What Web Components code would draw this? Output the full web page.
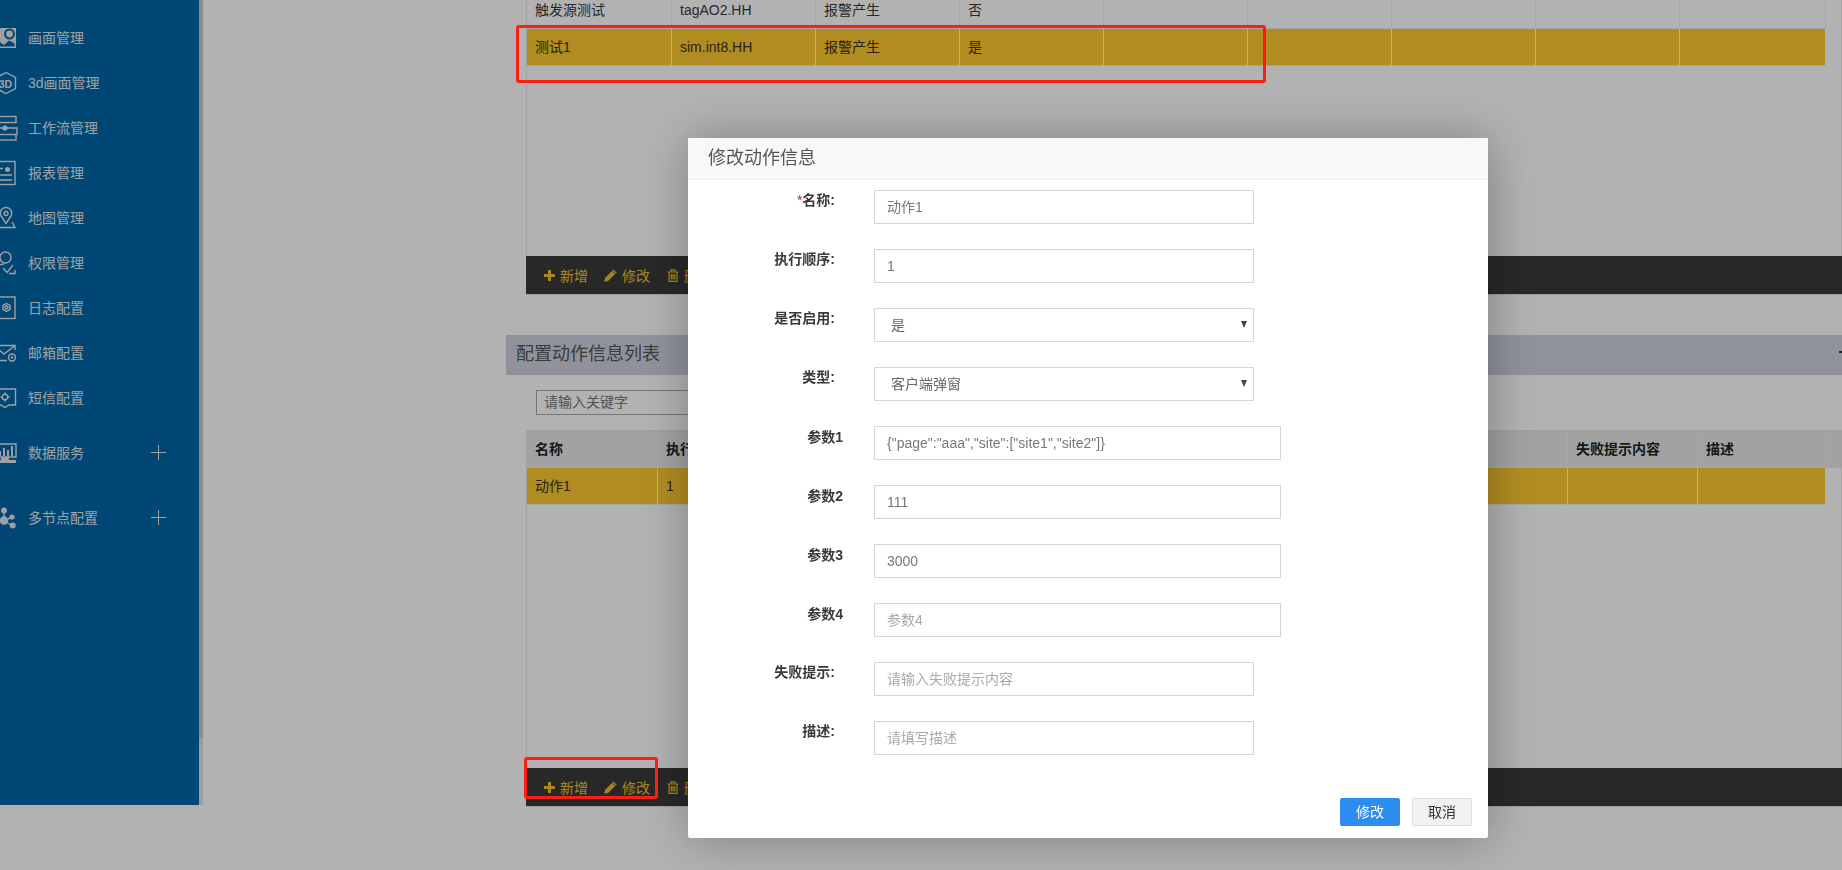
<!DOCTYPE html>
<html lang="zh"><head><meta charset="utf-8"><title>修改动作信息</title>
<style>
html,body{margin:0;height:870px;overflow:hidden;background:#fff;font:14px "Liberation Sans","Noto Sans CJK SC",sans-serif;color:#333}
</style></head><body>
<app-page>
  <side-nav>
    <nav-item icon="top"></nav-item>
    <nav-item icon="pic">画面管理</nav-item>
    <nav-item icon="d3">3d画面管理</nav-item>
    <nav-item icon="flow">工作流管理</nav-item>
    <nav-item icon="report">报表管理</nav-item>
    <nav-item icon="map">地图管理</nav-item>
    <nav-item icon="user">权限管理</nav-item>
    <nav-item icon="log">日志配置</nav-item>
    <nav-item icon="mail">邮箱配置</nav-item>
    <nav-item icon="sms">短信配置</nav-item>
    <nav-item icon="data" plus style="margin-top:10px">数据服务</nav-item>
    <nav-item icon="node" plus style="margin-top:20px">多节点配置</nav-item>
  </side-nav>
  <work-area>
    <data-table style="--cols:145px 144px 144px 144px 144px 144px 144px 144px 146px;height:264px;margin-top:-8px">
      <t-row cells="触发源测试|tagAO2.HH|报警产生|否|||||"></t-row>
      <t-row kind="gold" cells="测试1|sim.int8.HH|报警产生|是|||||"></t-row>
    </data-table>
    <tool-bar></tool-bar>
    <section-title>配置动作信息列表</section-title>
    <search-box>请输入关键字</search-box>
    <data-table style="--cols:131px 130px 130px 130px 130px 130px 130px 130px 130px 128px;height:338px;border-top:1px solid #e4e4e4">
      <t-row kind="head" cells="名称|执行顺序|||||||失败提示内容|描述"></t-row>
      <t-row kind="gold" cells="动作1|1||||||||"></t-row>
    </data-table>
    <tool-bar></tool-bar>
  </work-area>
</app-page>
<modal-layer heading="修改动作信息">
  <form-field label="名称:" required value="动作1"></form-field>
  <form-field label="执行顺序:" value="1"></form-field>
  <form-field label="是否启用:" value="是" select></form-field>
  <form-field label="类型:" value="客户端弹窗" select></form-field>
  <form-field label="参数1" value='{"page":"aaa","site":["site1","site2"]}' wide></form-field>
  <form-field label="参数2" value="111" wide></form-field>
  <form-field label="参数3" value="3000" wide></form-field>
  <form-field label="参数4" hint="参数4" wide></form-field>
  <form-field label="失败提示:" hint="请输入失败提示内容"></form-field>
  <form-field label="描述:" hint="请填写描述"></form-field>
  <modal-button slot="foot" primary>修改</modal-button>
  <modal-button slot="foot">取消</modal-button>
</modal-layer>
<mark-box style="left:516px;top:25px;width:750px;height:58px"></mark-box>
<mark-box style="left:524px;top:757px;width:134px;height:42px"></mark-box>
<script>
const FONT='"Liberation Sans","Noto Sans CJK SC",sans-serif';
function def(name,css,html,init){
  customElements.define(name,class extends HTMLElement{
    constructor(){super();this.attachShadow({mode:'open'});}
    connectedCallback(){
      const h=typeof html==='function'?html(this):html;
      this.shadowRoot.innerHTML='<style>'+css+'</style>'+h;
      if(init)init(this);
    }
  });
}
const C='#e3e6e8',B='#0066aa';
const S=`fill="none" stroke="${C}" stroke-width="1.4"`;
const ICONS={
 top:`<path d="M-6 4.5H6" ${S}/><circle cx="12" cy="2" r="2.6" ${S}/><path d="M6 4.5L10 3" ${S}/>`,
 pic:`<path fill="${C}" d="M-6-9H16V11H-6z"/><path fill="${B}" d="M-6 1L4 8 9 3.500 14.600 6.500V9.600H-6z"/><circle cx="9.500" cy="-3" r="5.500" fill="${B}"/><circle cx="9.500" cy="-3" r="3.400" fill="${C}"/>`,
 d3:`<path d="M6-9.500L15.500-4.500V6.500L6 11.500-3.500 6.500V-4.500z" ${S}/><text x="5.500" y="5.500" text-anchor="middle" font-family="Liberation Sans" font-weight="700" font-size="10.500" fill="${C}">3D</text>`,
 flow:`<rect x="-3" y="-10.500" width="19" height="6" ${S}/><path d="M-6 1H17V8" ${S}/><circle cx="5" cy="1" r="2.600" fill="${C}"/><rect x="-4" y="7.500" width="20" height="5.500" ${S}/>`,
 report:`<rect x="-5" y="-10.500" width="20" height="23" ${S}/><circle cx="7.500" cy="-2.500" r="2.500" fill="${C}"/><path d="M-2-3.500H3M-2 3H12M-2 8H12" fill="none" stroke="${C}" stroke-width="1.700"/>`,
 map:`<path d="M6 6.500L1.800 0A5.700 5.700 0 1 1 10.200 0z" ${S}/><circle cx="6" cy="-3.500" r="2" ${S}/><path d="M-6 10.500H15L12 5" ${S}/>`,
 user:`<circle cx="5.500" cy="-4.500" r="5.500" ${S}/><path d="M-6 8C-3 3 1 2 4 2M3 6L7 10.500 13 3M9 11.500H15V8" ${S}/>`,
 log:`<rect x="-5" y="-10" width="20" height="21.500" ${S}/><path d="M6.500-3.500L10-1.500V2.500L6.500 4.500 3 2.500V-1.500z" ${S}/><circle cx="6.500" cy=".5" r="1.500" ${S}/>`,
 mail:`<path d="M15-2V-6.500H-6V8.500H7M-6-6.500L4 2 15-6.500" ${S}/><circle cx="12" cy="5.500" r="3.500" ${S}/><circle cx="12" cy="5.500" r="1.200" fill="${C}"/>`,
 sms:`<path d="M-6-8H15.500V8H9L5 10.500 1 8H-6z" ${S}/><circle cx="5" cy="0" r="2.800" ${S}/><path d="M5-4.500V-3M5 3V4.500M.5 0H2M8 0H9.500" ${S}/>`,
 data:`<path d="M-6-8H16V5H-6z" ${S}/><path fill="${C}" d="M-1-1H1V4H-1zM3-4H5V4H3zM7-2H9V4H7zM11-6H13V4H11zM-6 8H16V11H-6zM1 5H9V8H1z"/>`,
 node:`<path d="M4-7V4M12 0L4 4M13 9L4 4" ${S}/><circle cx="4" cy="-6.500" r="3" fill="${C}"/><circle cx="12" cy="0" r="2.600" fill="${C}"/><circle cx="12.700" cy="8.500" r="3" fill="${C}"/><circle cx="4" cy="3.500" r="4.200" fill="${C}"/>`
};
const boxes={
 plus:'<svg width="11" height="11" viewBox="0 0 11 11"><path fill="currentColor" d="M4 0H7V4H11V7H7V11H4V7H0V4H4z"/></svg>',
 pencil:'<svg width="13" height="13" viewBox="0 0 13 13"><path fill="currentColor" d="M9.500.5L12.500 3.500 4 12 .3 12.700 1 9zM8.500 2.800L10.300 4.600 11 3.900 9.200 2.100z"/></svg>',
 trash:'<svg width="12" height="13" viewBox="0 0 12 13"><path fill="none" stroke="currentColor" stroke-width="1.200" d="M.5 3H11.500M2 3V12.300H10V3M4 2.800V.8H8V2.800M4.300 5V10.500M6 5V10.500M7.700 5V10.500"/></svg>'
};
def('app-page',`:host{display:flex;align-items:flex-start;width:1842px;height:870px;overflow:hidden;font-family:${FONT}}`,'<slot></slot>');
def('side-nav',`:host{display:flex;flex:none;width:203px;height:805px;overflow:hidden;background:#0066aa}
 nav{flex:none;width:199px;margin-top:-31px;display:flex;flex-direction:column}
 .track{flex:none;width:4px;height:805px;background:#dce3ea}.thumb{height:738px;background:#c6c6c6}`,
 '<nav><slot></slot></nav><div class="track"><div class="thumb"></div></div>');
def('nav-item',`:host{display:flex;align-items:center;flex:none;height:45px;color:#e2e6e9;font-size:14px;font-family:${FONT}}
 svg{flex:none;width:24px;height:24px;margin-left:-6px;overflow:visible}
 .t{margin-left:10px;white-space:nowrap;flex:1}
 .p{flex:none;width:15px;height:15px;margin:2px 33px 0 0}`,
 el=>`<svg viewBox="-6 -12 24 24">${ICONS[el.getAttribute('icon')]||''}</svg><span class="t"><slot></slot></span>${el.hasAttribute('plus')?`<svg class="p" style="margin-left:0" viewBox="0 0 15 15"><path d="M7.500 0V15M0 7.500H15" stroke="#e9e9e9" fill="none"/></svg>`:''}`);
def('work-area',`:host{display:flex;flex-direction:column;flex:1;min-width:0}`,'<slot></slot>');
def('data-table',`:host{display:block;flex:none;box-sizing:border-box;margin-left:323px;border-left:1px solid #e8e8e8;border-right:1px solid #e8e8e8;overflow:hidden;font-size:14px;color:#3a3a3a}`,'<slot></slot>');
def('t-row',`:host{display:grid;grid-template-columns:var(--cols);height:37px;box-sizing:border-box}
 :host([kind=head]){background:#e9e9e9;color:#222;font-weight:600;border-right:0}
 span{box-sizing:border-box;height:37px;padding:0 8px;line-height:36px;white-space:nowrap;overflow:hidden;border-right:1px solid #efefef;border-bottom:1px solid #efefef}
 :host([kind=gold]) span{background:#fec930;color:#3b3214;border-right-color:#fff;height:37px}
 :host([kind=gold]){color:#3b3214}`,
 el=>el.getAttribute('cells').split('|').map(t=>`<span>${t}</span>`).join(''));
def('tool-bar',`:host{display:flex;align-items:center;flex:none;box-sizing:content-box;height:38px;margin-left:323px;padding-left:18px;border-bottom:1px solid #e2e2e2;background:#3a3a3a;color:#f2c22f;font-size:14px;gap:16px}
 b{display:flex;align-items:center;font-weight:400;gap:5px}
 b:first-child{gap:6px}
 b:last-child{margin-left:1px}`,
 ()=>`<b>${boxes.plus}新增</b><b>${boxes.pencil}修改</b><b>${boxes.trash}删除</b>`);
def('section-title',`:host{display:block;flex:none;margin:40px 0 0 303px;height:40px;padding-left:10px;background:#ced2df;color:#555;font-size:18px;line-height:38px;position:relative}
 i{position:absolute;right:0;top:16px;width:3px;height:2px;background:#333}`,'<slot></slot><i></i>');
def('search-box',`:host{display:block;flex:none;box-sizing:border-box;margin:15px 0 15px 333px;width:240px;height:25px;padding-left:7px;border:1px solid #aaa;color:#777;font-size:14px;line-height:23px}`,'<slot></slot>');
def('modal-layer',`:host{position:fixed;left:0;top:0;width:1842px;height:870px;background:rgba(0,0,0,.3);font-family:${FONT};z-index:5}
 .box{position:absolute;left:688px;top:138px;width:800px;height:700px;display:flex;flex-direction:column;background:#fff;border-radius:2px;box-shadow:1px 1px 50px rgba(0,0,0,.3)}
 header{flex:none;height:41px;padding-left:20px;background:#f8f8f8;border-bottom:1px solid #eee;font-size:18px;line-height:40px;color:#555}
 .body{display:flex;flex-direction:column;gap:25px;padding-top:10px}
 footer{margin-top:auto;display:flex;justify-content:flex-end;gap:12px;padding:0 16px 12px 0}`,
 el=>`<div class="box"><header>${el.getAttribute('heading')}</header><div class="body"><slot></slot></div><footer><slot name="foot"></slot></footer></div>`);
def('form-field',`:host{display:grid;grid-template-columns:147px 1fr;column-gap:39px;height:34px;font-size:14px}
 label{text-align:right;font-weight:700;color:#3a3a3a;line-height:20px;white-space:nowrap}
 label i{color:#f00;font-style:normal;font-weight:400}
 :host([wide]) label{margin-right:-8px;padding-top:1px}
 .in{box-sizing:border-box;position:relative;width:380px;height:34px;padding-left:12px;border:1px solid #d0d5de;color:#777;line-height:32px;white-space:nowrap}
 :host([wide]) .in{width:407px}
 :host([select]) .in{padding-left:16px;color:#666}
 .ph{color:#aaa}
 .arr{position:absolute;right:6px;top:12px;width:0;height:0;border:3px solid transparent;border-top:7px solid #444;border-bottom:0}`,
 el=>{const v=(el.getAttribute('value')||'').replace(/"/g,'&quot;');const hint=el.getAttribute('hint');
  return `<label>${el.hasAttribute('required')?'<i>*</i>':''}${el.getAttribute('label')}</label><div class="in">${hint?`<span class="ph">${hint}</span>`:v}${el.hasAttribute('select')?'<span class="arr"></span>':''}</div>`;});
def('modal-button',`:host{display:block;box-sizing:border-box;width:60px;height:28px;border:1px solid #dedede;border-radius:2px;background:#f1f1f1;color:#333;font-size:14px;line-height:26px;text-align:center}
 :host([primary]){background:#2d8cf0;border-color:#2d8cf0;color:#fff}`,'<slot></slot>');
def('mark-box',`:host{position:fixed;box-sizing:border-box;border:3px solid #fb1e14;border-radius:3px;z-index:6}`,'');
</script>
</body></html>
